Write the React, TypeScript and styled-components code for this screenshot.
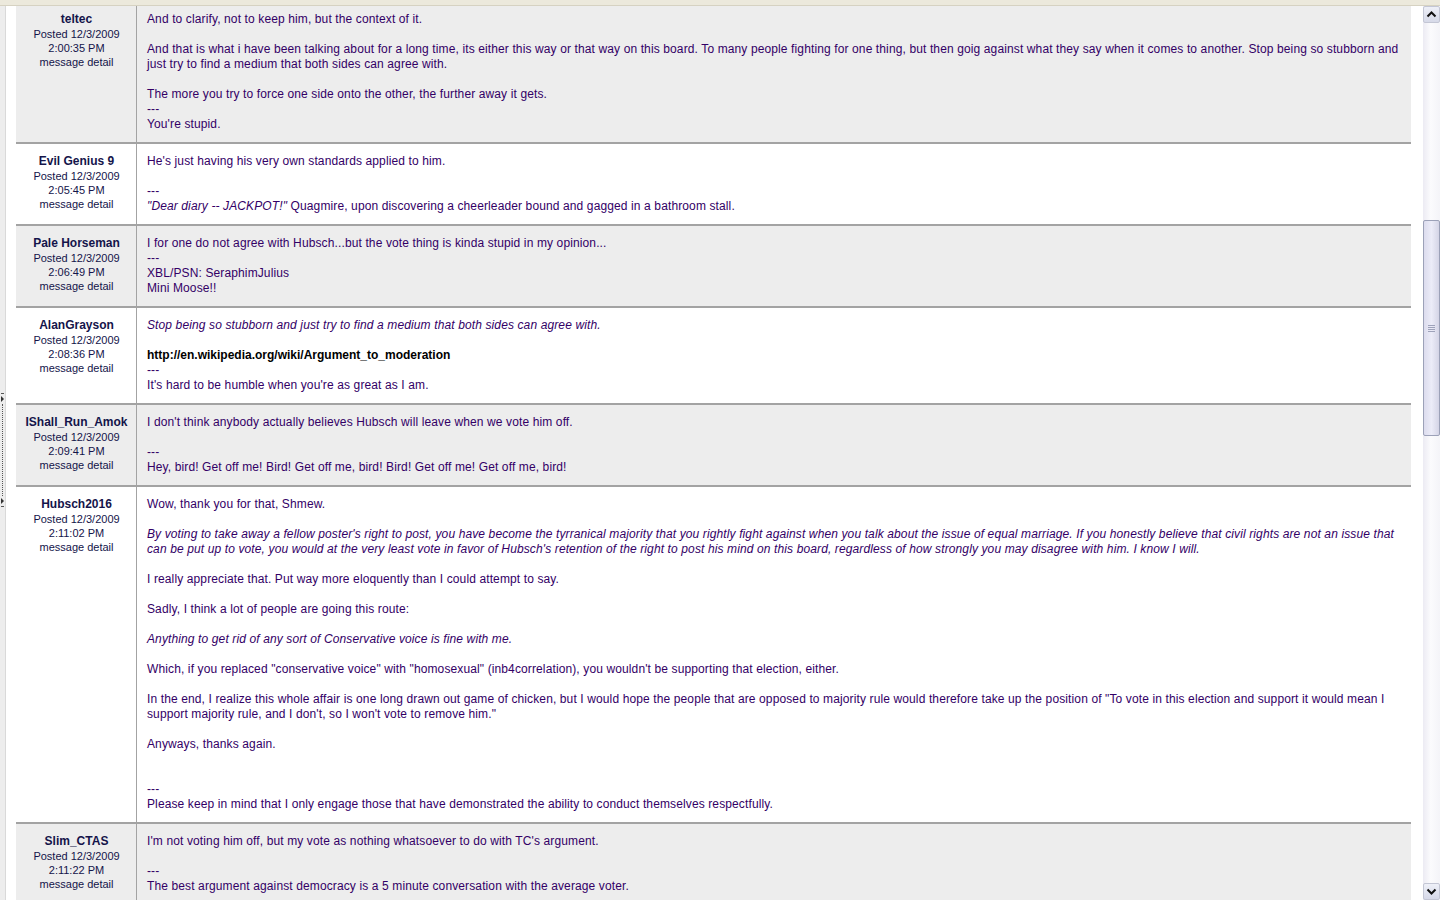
import React from 'react';
import styled, { createGlobalStyle } from 'styled-components';

type Post = {
  author: string;
  time: string;
  body: React.ReactNode;
};

// built lazily so the styled components below are defined by the time it runs
function getPosts(): Post[] {
  return [
    {
      author: 'teltec',
      time: '2:00:35 PM',
      body: (
        <>
          And to clarify, not to keep him, but the context of it.
          <br />
          <br />
          And that is what i have been talking about for a long time, its either this way or that way on this board. To
          many people fighting for one thing, but then goig against what they say when it comes to another. Stop being
          so stubborn and just try to find a medium that both sides can agree with.
          <br />
          <br />
          The more you try to force one side onto the other, the further away it gets.
          <br />
          ---
          <br />
          You're stupid.
        </>
      ),
    },
    {
      author: 'Evil Genius 9',
      time: '2:05:45 PM',
      body: (
        <>
          He's just having his very own standards applied to him.
          <br />
          <br />
          ---
          <br />
          <i>"Dear diary -- JACKPOT!"</i> Quagmire, upon discovering a cheerleader bound and gagged in a bathroom stall.
        </>
      ),
    },
    {
      author: 'Pale Horseman',
      time: '2:06:49 PM',
      body: (
        <>
          I for one do not agree with Hubsch...but the vote thing is kinda stupid in my opinion...
          <br />
          ---
          <br />
          XBL/PSN: SeraphimJulius
          <br />
          Mini Moose!!
        </>
      ),
    },
    {
      author: 'AlanGrayson',
      time: '2:08:36 PM',
      body: (
        <>
          <i>Stop being so stubborn and just try to find a medium that both sides can agree with.</i>
          <br />
          <br />
          <Link href="#">http://en.wikipedia.org/wiki/Argument_to_moderation</Link>
          <br />
          ---
          <br />
          It's hard to be humble when you're as great as I am.
        </>
      ),
    },
    {
      author: 'IShall_Run_Amok',
      time: '2:09:41 PM',
      body: (
        <>
          I don't think anybody actually believes Hubsch will leave when we vote him off.
          <br />
          <br />
          ---
          <br />
          Hey, bird! Get off me! Bird! Get off me, bird! Bird! Get off me! Get off me, bird!
        </>
      ),
    },
    {
      author: 'Hubsch2016',
      time: '2:11:02 PM',
      body: (
        <>
          Wow, thank you for that, Shmew.
          <br />
          <br />
          <i>
            By voting to take away a fellow poster's right to post, you have become the tyrranical majority that you
            rightly fight against when you talk about the issue of equal marriage. If you honestly believe that civil
            rights are not an issue that can be put up to vote, you would at the very least vote in favor of Hubsch's
            retention of the right to post his mind on this board, regardless of how strongly you may disagree with him.
            I know I will.
          </i>
          <br />
          <br />
          I really appreciate that. Put way more eloquently than I could attempt to say.
          <br />
          <br />
          Sadly, I think a lot of people are going this route:
          <br />
          <br />
          <i>Anything to get rid of any sort of Conservative voice is fine with me.</i>
          <br />
          <br />
          Which, if you replaced "conservative voice" with "homosexual" (inb4correlation), you wouldn't be supporting
          that election, either.
          <br />
          <br />
          In the end, I realize this whole affair is one long drawn out game of chicken, but I would hope the people
          that are opposed to majority rule would therefore take up the position of "To vote in this election and
          support it would mean I support majority rule, and I don't, so I won't vote to remove him."
          <br />
          <br />
          Anyways, thanks again.
          <br />
          <br />
          <br />
          ---
          <br />
          Please keep in mind that I only engage those that have demonstrated the ability to conduct themselves
          respectfully.
        </>
      ),
    },
    {
      author: 'Slim_CTAS',
      time: '2:11:22 PM',
      body: (
        <>
          I'm not voting him off, but my vote as nothing whatsoever to do with TC's argument.
          <br />
          <br />
          ---
          <br />
          The best argument against democracy is a 5 minute conversation with the average voter.
        </>
      ),
    },
  ];
}

export default function App() {
  const posts = getPosts();
  return (
    <>
      <GlobalStyle />
      <Window>
        <TopBar />
        <Frame>
          <Gutter>
            <Splitter>
              <SplitMark />
              <SplitArrow />
              <SplitDots />
              <SplitArrow />
              <SplitMark />
            </Splitter>
          </Gutter>
          <Viewport>
            <Thread>
              {posts.map((post, i) => (
                <PostRow key={post.author} $alt={i % 2 === 0}>
                  <Author>
                    <AuthorName>{post.author}</AuthorName>
                    <Meta>Posted 12/3/2009</Meta>
                    <Meta>{post.time}</Meta>
                    <Meta>message detail</Meta>
                  </Author>
                  <Body>{post.body}</Body>
                </PostRow>
              ))}
            </Thread>
          </Viewport>
          <Scrollbar>
            <ScrollButton>
              <svg width="15" height="15" viewBox="0 0 15 15">
                <path d="M3.5 9.5 L7.5 5.5 L11.5 9.5" fill="none" stroke="#111" strokeWidth="2" />
              </svg>
            </ScrollButton>
            <ScrollTrack>
              <ScrollThumb>
                <Grip />
                <Grip />
                <Grip />
                <Grip />
              </ScrollThumb>
            </ScrollTrack>
            <ScrollButton>
              <svg width="15" height="15" viewBox="0 0 15 15">
                <path d="M3.5 5.5 L7.5 9.5 L11.5 5.5" fill="none" stroke="#111" strokeWidth="2" />
              </svg>
            </ScrollButton>
          </Scrollbar>
        </Frame>
      </Window>
    </>
  );
}

const GlobalStyle = createGlobalStyle`
  html, body {
    margin: 0;
    padding: 0;
    height: 900px;
    overflow: hidden;
    background: #fff;
  }
`;

const Window = styled.div`
  display: flex;
  flex-direction: column;
  width: 1440px;
  height: 900px;
  font-family: 'Liberation Sans', Arial, sans-serif;
`;

const TopBar = styled.div`
  height: 5px;
  background: #ece9dc;
  border-bottom: 1px solid #d6d2c2;
  flex: none;
`;

const Frame = styled.div`
  flex: 1;
  display: flex;
  min-height: 0;
`;

const Gutter = styled.div`
  width: 16px;
  flex: none;
  background: linear-gradient(to right, #ededed 0, #ededed 5px, #d9d9d9 5px, #d9d9d9 6px, #fff 6px);
`;

const Splitter = styled.div`
  display: flex;
  flex-direction: column;
  align-items: flex-start;
  gap: 2px;
  margin-top: 387px;
  padding-left: 1px;
`;

const SplitMark = styled.div`
  width: 3px;
  height: 1px;
  background: #555;
`;

const SplitArrow = styled.div`
  width: 0;
  height: 0;
  border-top: 3px solid transparent;
  border-bottom: 3px solid transparent;
  border-left: 3px solid #333;
`;

const SplitDots = styled.div`
  width: 1px;
  height: 92px;
  margin-left: 1px;
  border-left: 1px dotted #555;
`;

const Viewport = styled.div`
  flex: 1;
  overflow: hidden;
  min-width: 0;
`;

const Thread = styled.div`
  margin-top: -4px;
`;

const PostRow = styled.div<{ $alt: boolean }>`
  display: grid;
  grid-template-columns: 121px 1fr;
  background: ${(p) => (p.$alt ? '#ededed' : '#fff')};
  border-bottom: 2px solid #a3a3a3;
`;

const Author = styled.div`
  border-right: 1px solid #a3a3a3;
  padding: 10px 2px 10px 3px;
  text-align: center;
  color: #14144a;
`;

const AuthorName = styled.div`
  font-weight: bold;
  font-size: 12px;
  line-height: 15px;
`;

const Meta = styled.div`
  font-size: 11px;
  line-height: 14px;
`;

const Body = styled.div`
  padding: 10px 10px;
  font-size: 12px;
  line-height: 15px;
  letter-spacing: 0.12px;
  color: #330066;
`;

const Link = styled.a`
  color: #000;
  font-weight: bold;
  text-decoration: none;
  letter-spacing: 0;
`;

const Scrollbar = styled.div`
  width: 17px;
  flex: none;
  margin-left: 12px;
  display: flex;
  flex-direction: column;
  background: linear-gradient(to right, #ecebf3, #fbfbfd 45%, #f4f4f8);
`;

const ScrollButton = styled.div`
  height: 15px;
  flex: none;
  border: 1px solid #c3c6d4;
  border-radius: 2px;
  background: linear-gradient(to bottom, #eef0f8, #d6d9e8);
  display: flex;
  align-items: center;
  justify-content: center;
`;

const ScrollTrack = styled.div`
  flex: 1;
  padding-top: 197px;
`;

const ScrollThumb = styled.div`
  height: 214px;
  border: 1px solid #9ca1b8;
  border-radius: 2px;
  background: linear-gradient(to right, #dcdcee, #ececf8 50%, #d4d4e6);
  display: flex;
  flex-direction: column;
  align-items: center;
  justify-content: center;
  gap: 1px;
`;

const Grip = styled.div`
  width: 7px;
  height: 1px;
  background: #9ea2ba;
`;
